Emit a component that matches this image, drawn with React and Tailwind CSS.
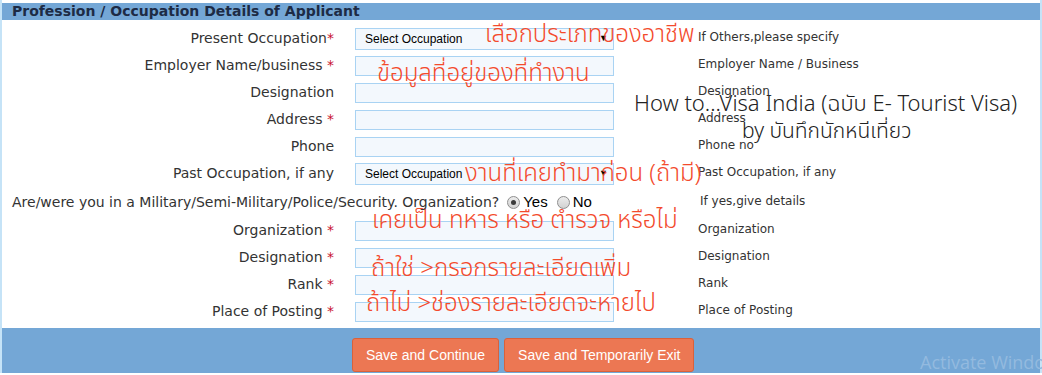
import React from "react"

const ROWS = [
  { label: "Present Occupation", star: "tight", kind: "select", hint: "If Others,please specify" },
  { label: "Employer Name/business", star: true, hint: "Employer Name / Business" },
  { label: "Designation", hint: "Designation" },
  { label: "Address", star: true, hint: "Address" },
  { label: "Phone", hint: "Phone no" },
  { label: "Past Occupation, if any", kind: "select", hint: "Past Occupation, if any" },
]

const MILITARY = [
  { label: "Organization", hint: "Organization" },
  { label: "Designation", hint: "Designation" },
  { label: "Rank", hint: "Rank" },
  { label: "Place of Posting", hint: "Place of Posting" },
]

const NOTES = [
  { text: "เลือกประเภทของอาชีพ", cls: "left-[485px] top-[18px]" },
  { text: "ข้อมูลที่อยู่ของที่ทำงาน", cls: "left-[377px] top-[57px]" },
  { text: "งานที่เคยทำมาก่อน (ถ้ามี)", cls: "left-[465px] top-[157px]" },
  { text: "เคยเป็น ทหาร หรือ ตำรวจ หรือไม่", cls: "left-[372px] top-[204px]" },
  { text: "ถ้าใช่ >กรอกรายละเอียดเพิ่ม", cls: "left-[371px] top-[252px]" },
  { text: "ถ้าไม่ >ช่องรายละเอียดจะหายไป", cls: "left-[366px] top-[287px]" },
]

const LABEL = "text-right pr-[21px] text-[14px] text-[#333] whitespace-nowrap"
const HINT = "mb-[4px] text-[12px] text-[#333] whitespace-nowrap"
const FIELD = "h-[20px] w-[259px] border border-[#a9d3f3] bg-[#f3f8fd]"

const Star = ({ tight }) => (
  <span className="text-[#c8102e]">{tight ? "*" : " *"}</span>
)

const SelectBox = () => (
  <div className="flex h-[22px] w-[259px] items-center justify-between border border-[#a9d3f3] bg-[#f3f8fd] pl-[9px] pr-[5px] font-['Liberation_Sans',Arial,sans-serif] text-[12px] text-black">
    <span>Select Occupation</span>
    <span className="text-[9px] leading-none">▼</span>
  </div>
)

const Radio = ({ checked }) => (
  <span className="inline-flex h-[13px] w-[13px] items-center justify-center rounded-full border border-[#8e8e8e] bg-gradient-to-b from-[#ececec] to-[#d2d2d2]">
    {checked && <span className="h-[5px] w-[5px] rounded-full bg-[#3a3a3a]" />}
  </span>
)

const Row = ({ label, star, kind, hint }) => (
  <div className="grid h-[27px] grid-cols-[353px_343px_1fr] items-center">
    <div className={LABEL}>
      {label}
      {star && <Star tight={star === "tight"} />}
    </div>
    <div>{kind === "select" ? <SelectBox /> : <div className={FIELD} />}</div>
    <div className={HINT}>{hint}</div>
  </div>
)

export default function App() {
  return (
    <div className="relative h-[375px] w-[1042px] overflow-hidden bg-white font-['DejaVu_Sans',Verdana,sans-serif]">
      <div className="flex h-[373px] flex-col border-x-2 border-[#c5e3f7]">
        {/* Header */}
        <div className="mt-[3px] flex h-[17px] items-center bg-[#74a7d6] pl-[10px] text-[14px] font-bold text-[#1d2b45]">
          Profession / Occupation Details of Applicant
        </div>

        {/* Form */}
        <div className="pt-[5px]">
          {ROWS.map((r, i) => <Row key={i} {...r} />)}

          <div className="grid h-[30px] grid-cols-[696px_1fr] items-center">
            <div className="flex items-center whitespace-nowrap pl-[10px] text-[14px] text-[#333]">
              Are/were you in a Military/Semi-Military/Police/Security. Organization?
              <span className="ml-[8px] flex items-center gap-[3px] font-['Liberation_Sans',Arial,sans-serif] text-[15px] text-black">
                <Radio checked /> Yes
              </span>
              <span className="ml-[9px] flex items-center gap-[3px] font-['Liberation_Sans',Arial,sans-serif] text-[15px] text-black">
                <Radio /> No
              </span>
            </div>
            <div className="mb-[3px] pl-[2px] text-[12px] text-[#333] whitespace-nowrap">If yes,give details</div>
          </div>

          {MILITARY.map((r, i) => <Row key={i} {...r} star />)}
        </div>

        {/* Footer */}
        <div className="mt-[3px] flex flex-1 items-start gap-[5px] bg-[#74a7d6] pl-[350px] pt-[10px]">
          <button className="h-[34px] rounded-[3px] border border-[#d9613b] bg-[#ec7753] px-[13px] font-['Liberation_Sans',Arial,sans-serif] text-[14px] text-white">
            Save and Continue
          </button>
          <button className="h-[34px] rounded-[3px] border border-[#d9613b] bg-[#ec7753] px-[13px] font-['Liberation_Sans',Arial,sans-serif] text-[14px] text-white">
            Save and Temporarily Exit
          </button>
        </div>
      </div>

      {/* Annotations laid over the form */}
      {NOTES.map((n, i) => (
        <div
          key={i}
          className={`absolute ${n.cls} whitespace-nowrap font-['Noto_Sans_Thai','Noto_Sans',sans-serif] text-[24px] font-light leading-[34px] text-[#f34a2c]`}
        >
          {n.text}
        </div>
      ))}
      <div className="absolute left-[634px] top-[90px] whitespace-nowrap font-['Noto_Sans_Thai','Noto_Sans',sans-serif] text-[22px] font-light leading-[30px] text-[#222]">
        How to...Visa India (ฉบับ E- Tourist Visa)
      </div>
      <div className="absolute left-[742px] top-[117px] whitespace-nowrap font-['Noto_Sans_Thai','Noto_Sans',sans-serif] text-[21px] font-light leading-[30px] text-[#222]">
        by บันทึกนักหนีเที่ยว
      </div>
      <div className="absolute left-[920px] top-[349px] whitespace-nowrap font-['Open_Sans',sans-serif] text-[18px] text-[#93badf]">
        Activate Windows
      </div>
    </div>
  )
}
